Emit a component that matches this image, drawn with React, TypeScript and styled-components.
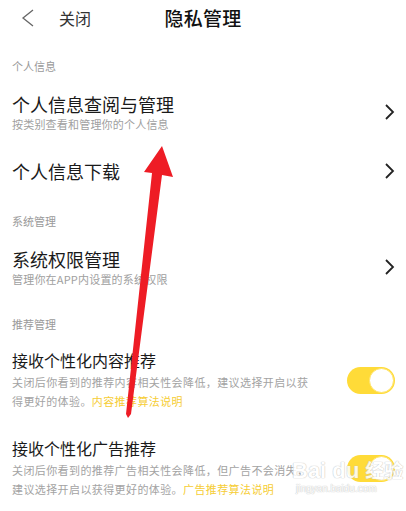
import React from 'react';
import styled, { createGlobalStyle } from 'styled-components';

const GlobalStyle = createGlobalStyle`
  html, body {
    margin: 0;
    padding: 0;
    background: #fff;
  }
  body {
    font-family: "Noto Sans CJK SC", "Noto Sans", sans-serif;
    color: #222;
  }
`;

const Page = styled.div`
  position: relative;
  width: 406px;
  height: 511px;
  overflow: hidden;
  background: #fff;
`;

const Header = styled.header`
  display: grid;
  grid-template-columns: 1fr auto 1fr;
  align-items: center;
  height: 36px;
`;

const HeaderLeft = styled.div`
  display: flex;
  align-items: center;
  gap: 24px;
  padding-left: 21px;
`;

const CloseText = styled.span`
  font-size: 16px;
  color: #333;
  line-height: 20px;
`;

const Title = styled.h1`
  margin: 0;
  font-size: 19px;
  font-weight: 500;
  line-height: 24px;
  color: #111;
  letter-spacing: 0.3px;
`;

const Body = styled.main`
  padding: 0 11px 0 12px;
`;

const SectionLabel = styled.div<{ $top: number }>`
  padding-top: ${(p) => p.$top}px;
  font-size: 11px;
  line-height: 16px;
  color: #9a9a9a;
`;

const Row = styled.div<{ $top: number; $bottom: number }>`
  display: flex;
  align-items: center;
  justify-content: space-between;
  padding-top: ${(p) => p.$top}px;
  padding-bottom: ${(p) => p.$bottom}px;
`;

const RowText = styled.div`
  display: flex;
  flex-direction: column;
`;

const RowTitle = styled.div<{ $small?: boolean }>`
  font-size: ${(p) => (p.$small ? 16 : 18)}px;
  line-height: ${(p) => (p.$small ? 22 : 24)}px;
  color: #1a1a1a;
`;

const RowSub = styled.div`
  font-size: 11px;
  line-height: 16px;
  color: #a0a0a0;
  letter-spacing: 0.2px;
`;

const RowDesc = styled.div`
  margin-top: 2px;
  width: 300px;
  font-size: 11px;
  line-height: 19px;
  color: #a3a3a3;
  letter-spacing: 0.4px;
`;

const Link = styled.span`
  color: #f6cd35;
`;

const Toggle = styled.div`
  position: relative;
  flex: none;
  width: 48px;
  height: 27px;
  border-radius: 14px;
  background: #ffdb38;
`;

const Knob = styled.div`
  position: absolute;
  right: 1px;
  top: 1px;
  width: 23px;
  height: 23px;
  border-radius: 50%;
  background: #fff;
  border: 1px solid #ffe46a;
`;

const Overlay = styled.svg`
  position: absolute;
  left: 0;
  top: 0;
  pointer-events: none;
`;

const Watermark = styled.div`
  position: absolute;
  left: 292px;
  top: 458px;
  display: flex;
  flex-direction: column;
  align-items: flex-start;
  color: #fff;
  font-family: "Liberation Sans", Arial, sans-serif;
  text-shadow: 0 0 1px #bbb, 0 0 1px #bbb;
  opacity: 0.85;
  pointer-events: none;
`;

const WatermarkMain = styled.div`
  font-size: 22px;
  font-weight: 700;
  line-height: 24px;
  span {
    font-family: "Noto Sans CJK SC", sans-serif;
    font-size: 19px;
  }
`;

const WatermarkSub = styled.div`
  font-size: 10px;
  line-height: 12px;
  padding-left: 4px;
  color: #fff;
`;

const Chevron = () => (
  <svg width="12" height="16" viewBox="0 0 12 16">
    <path d="M3 1 L10 8 L3 15" fill="none" stroke="#222" strokeWidth="1.8" />
  </svg>
);

const BackIcon = () => (
  <svg width="14" height="20" viewBox="0 0 14 20">
    <path d="M12 2 L2 10 L12 18" fill="none" stroke="#666" strokeWidth="1.3" />
  </svg>
);

export default function App() {
  return (
    <Page>
      <GlobalStyle />
      <Header>
        <HeaderLeft>
          <BackIcon />
          <CloseText>关闭</CloseText>
        </HeaderLeft>
        <Title>隐私管理</Title>
        <div />
      </Header>

      <Body>
        <SectionLabel $top={22}>个人信息</SectionLabel>
        <Row $top={18} $bottom={14}>
          <RowText>
            <RowTitle>个人信息查阅与管理</RowTitle>
            <RowSub>按类别查看和管理你的个人信息</RowSub>
          </RowText>
          <Chevron />
        </Row>
        <Row $top={13} $bottom={13}>
          <RowText>
            <RowTitle>个人信息下载</RowTitle>
          </RowText>
          <Chevron />
        </Row>

        <SectionLabel $top={17}>系统管理</SectionLabel>
        <Row $top={18} $bottom={14}>
          <RowText>
            <RowTitle>系统权限管理</RowTitle>
            <RowSub>管理你在APP内设置的系统权限</RowSub>
          </RowText>
          <Chevron />
        </Row>

        <SectionLabel $top={15}>推荐管理</SectionLabel>
        <Row $top={17} $bottom={13}>
          <RowText>
            <RowTitle $small>接收个性化内容推荐</RowTitle>
            <RowDesc>
              关闭后你看到的推荐内容相关性会降低，建议选择开启以获得更好的体验。
              <Link>内容推荐算法说明</Link>
            </RowDesc>
          </RowText>
          <Toggle>
            <Knob />
          </Toggle>
        </Row>
        <Row $top={13} $bottom={12}>
          <RowText>
            <RowTitle $small>接收个性化广告推荐</RowTitle>
            <RowDesc>
              关闭后你看到的推荐广告相关性会降低，但广告不会消失，建议选择开启以获得更好的体验。
              <Link>广告推荐算法说明</Link>
            </RowDesc>
          </RowText>
          <Toggle>
            <Knob />
          </Toggle>
        </Row>
      </Body>

      <Watermark>
        <WatermarkMain>
          Bai du <span>经验</span>
        </WatermarkMain>
        <WatermarkSub>jingyan.baidu.com</WatermarkSub>
      </Watermark>

      <Overlay width="406" height="511" viewBox="0 0 406 511">
        <polygon
          points="162,146 173,177 162,175 131,414 128,418 126,414 152,173 144,172"
          fill="#ee1c25"
        />
      </Overlay>
    </Page>
  );
}
